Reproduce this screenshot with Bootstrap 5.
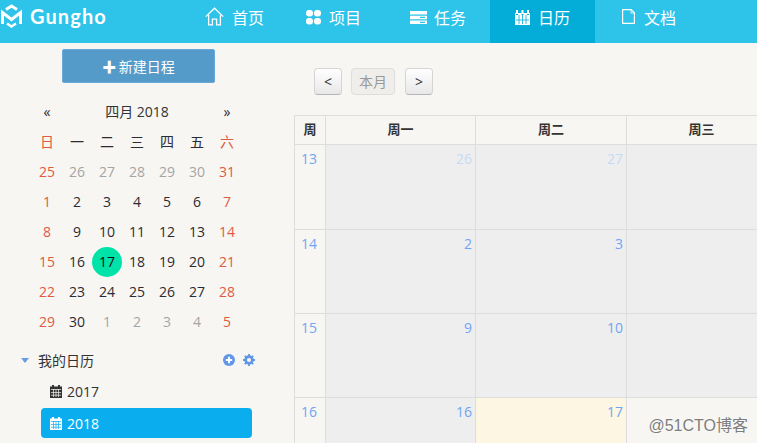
<!DOCTYPE html>
<html lang="zh"><head><meta charset="utf-8">
<link href="https://cdn.jsdelivr.net/npm/bootstrap@5.3.0/dist/css/bootstrap.min.css" rel="stylesheet">
<style>
html,body{height:443px;overflow:hidden}
body{background:#f7f6f2;font-family:"Open Sans","Noto Sans CJK SC",sans-serif;font-size:14px;color:#333}
.topbar{height:43px;background:#2ec3e9;padding:0;flex-wrap:nowrap}
.brand,.brand:hover,.brand:focus{width:175px;height:43px;color:#fff;font-family:"Lato",sans-serif;font-weight:700;font-size:20px;letter-spacing:1.1px;padding:0 0 11px 0;gap:7px}
.menu-link{height:43px;color:#fff;font-size:16px;display:flex;align-items:center;gap:8px;padding:0 0 7px 30px}
.menu-link:hover,.menu-link:focus{color:#fff}
.m1{width:105px}.m2{width:105px;padding-left:26px}.m3{width:105px;padding-left:25px;gap:7px}.m4{width:105px;padding-left:25px;background:#03add8;gap:8px}.m5{padding-left:27px;gap:9px}
.m4:hover,.m4:focus{background:#03add8}
.m1 svg{margin-top:-3px}.m2 svg{margin-top:-2px}
.m3 svg{margin-top:-1px}.m4 svg{margin-top:-2px}.m5 svg{margin-top:-4px}
.shell{height:400px;overflow:hidden}
.side{width:294px;flex:none;position:relative}
.newbtn{display:block;width:153px;height:34px;margin:6px 0 0 62px;padding:0;line-height:31px;background:#559bc9;border:1px solid #68a9d9;border-radius:2px;color:#fff;font-size:14px}
.newbtn:hover{background:#559bc9;color:#fff}
.newbtn b{margin-right:-1px}
.minical{width:210px;margin:13px 0 0 32px;table-layout:fixed;border-collapse:collapse;text-align:center}
.minical td{height:30px;padding:0;vertical-align:middle}
.mcol{width:30px}
.sun{color:#e05a42}.mut{color:#a5a5a5}
.dark{color:#2b2b33}
.todaydot{display:block;width:30px;height:30px;margin:1px 0 -1px;line-height:30px;border-radius:50%;background:#00e3a8;color:#111}
.tree-head{margin:12px 0 0 21px;width:234px;height:24px}
.caret-down{width:0;height:0;border:4px solid transparent;border-top:5px solid #6a9de8;border-bottom:0;margin-right:9px}
.tree-row{height:30px;width:211px;margin-left:41px;padding-left:9px;gap:5px;color:#333;border-radius:4px}
.tree-a{margin-top:4px}
.tree-b{margin-top:2px;background:#0aaeef;color:#fff}
.main{flex:1;min-width:0;overflow:hidden}
.toolbar{margin:25px 0 0 20px;height:27px;gap:9px}
.fcbtn{height:27px;width:28px;padding:0;font-size:14px;line-height:25px;color:#333;background:linear-gradient(#fff,#e8e8e8);border:1px solid #d5d5d5;border-bottom-color:#b5b5b5;border-radius:4px}
.fcoff{width:44px;background:#efeeea;color:#999;border-color:#dedede;opacity:1;margin-right:1px}
.cal{table-layout:fixed;width:482px;max-width:none;margin:20px 0 0;border-collapse:collapse;background:#f7f6f2;--bs-table-bg:transparent}
.cal th,.cal td{border:1px solid #ddd;padding:0}
.cal th{height:29px;text-align:center;font-size:13px;font-weight:700;color:#333;vertical-align:middle}
.cal td{height:84px;vertical-align:top;text-align:right;color:#6fa5f5;font-size:14px;padding:4px 3px 0 0;background:#eee;line-height:20px}
.cal .tall td{height:85px}
.cal td.wk{text-align:center;background:#f7f6f2;padding-right:2px}
.cal td.faint{color:#c7daf5}
.cal td.now{background:#fdf6e3}
.cal td.plain{background:#f7f6f2}
.c0{width:31px}.c1{width:150px}.c2{width:151px}
.wm{position:absolute;right:9px;bottom:5px;font-size:16px;color:#7d7d7d;text-shadow:0 0 2px #fff;font-family:"Liberation Sans","Noto Sans CJK SC",sans-serif}
</style></head>
<body class="position-relative">
<nav class="navbar topbar d-flex justify-content-start">
  <a class="navbar-brand brand d-flex align-items-center m-0" href="#">
    <svg class="ms-0" width="23" height="26" viewBox="0 0 23 26" fill="none" stroke="#fff" stroke-width="3"><path d="M6 6.500 11.500 3 17 6.500"/><path d="M2.500 21V9.500L11.500 16.500l9-7V21"/><path d="M7 20.500l4.500 3 4.500-3" stroke-width="2.400"/></svg>
    <span>Gungho</span>
  </a>
  <ul class="nav flex-nowrap">
    <li class="nav-item"><a class="nav-link menu-link m1" href="#"><svg width="19" height="19" viewBox="0 0 19 19" fill="none" stroke="#fff" stroke-width="1.3"><path d="M.8 9.600 9.500 1.200l8.700 8.400M3.600 8v9.800h3.800v-5.600h4.200v5.600h3.800V8"/></svg>首页</a></li>
    <li class="nav-item"><a class="nav-link menu-link m2" href="#"><svg width="15" height="15" viewBox="0 0 15 15" fill="#fff"><rect x="0" y="0" width="7" height="6.600" rx="3"/><rect x="8" y="0" width="7" height="6.600" rx="3"/><rect x="0" y="8" width="7" height="6.600" rx="3"/><rect x="8" y="8" width="7" height="6.600" rx="3"/></svg>项目</a></li>
    <li class="nav-item"><a class="nav-link menu-link m3" href="#"><svg width="17" height="13" viewBox="0 0 17 13" fill="#fff"><path d="M0 0h17v3.400H0zM0 4.800h17v3.400H0zM0 9.600h17V13H0z"/><path d="M10 5.800h5v1.200h-5zM10 10.700h5v1.200h-5z" fill="#2ec3e9"/></svg>任务</a></li>
    <li class="nav-item"><a class="nav-link menu-link m4" href="#"><svg width="15" height="16" viewBox="0 0 15 16" fill="#fff"><path d="M1 1h2v4H1zM6.500 1h2v4h-2zM12 1h2v4h-2zM0 4h1v2h2V4h3.500v2h2V4H12v2h2V4h1v12H0z"/><path d="M4 6v9M7.500 6v9M11 6v9M1 11h13" stroke="#03add8" stroke-width=".8"/></svg>日历</a></li>
    <li class="nav-item"><a class="nav-link menu-link m5" href="#"><svg width="13" height="15" viewBox="0 0 13 15" fill="none" stroke="#fff" stroke-width="1.200"><path d="M.6.600h8.600l3.200 3.200v10.600H.6z"/><path d="M9 .6v3.400h3.400" stroke-width=".8"/></svg>文档</a></li>
  </ul>
</nav>
<div class="shell d-flex">
  <aside class="side">
    <button class="btn newbtn" type="button"><b>✚</b> 新建日程</button>
    <table class="minical"><colgroup><col class="mcol"><col class="mcol"><col class="mcol"><col class="mcol"><col class="mcol"><col class="mcol"><col class="mcol"></colgroup><tbody id="mini"></tbody></table>
    <div class="tree-head d-flex align-items-center">
      <i class="caret-down"></i><span class="flex-grow-1">我的日历</span>
      <svg width="12" height="12" viewBox="0 0 12 12"><circle cx="6" cy="6" r="6" fill="#5f96e8"/><path d="M2.800 6h6.400M6 2.800v6.400" stroke="#fff" stroke-width="2"/></svg>
      <svg class="ms-2" width="12" height="12" viewBox="0 0 12 12"><circle cx="6" cy="6" r="3.400" fill="none" stroke="#5f96e8" stroke-width="2.600"/><path d="M6 0v12M0 6h12M1.800 1.800l8.400 8.400M10.200 1.800l-8.400 8.400" stroke="#5f96e8" stroke-width="1.800" stroke-dasharray="2.400 7.200 2.400"/></svg>
    </div>
    <div class="tree-row tree-a d-flex align-items-center"><svg width="12" height="13" viewBox="0 0 12 13" fill="#333"><path d="M2 0h2v2H2zM8 0h2v2H8zM0 1.500h12V13H0z"/><path d="M1 4.500h10M1 7.500h10M1 10.200h10M3.500 4v8M6 4v8M8.500 4v8" stroke="#f7f6f2" stroke-width=".7"/></svg>2017</div>
    <div class="tree-row tree-b d-flex align-items-center"><svg width="12" height="13" viewBox="0 0 12 13" fill="#fff"><path d="M2 0h2v2H2zM8 0h2v2H8zM0 1.500h12V13H0z"/><path d="M1 4.500h10M1 7.500h10M1 10.200h10M3.500 4v8M6 4v8M8.500 4v8" stroke="#0aaeef" stroke-width=".7"/></svg>2018</div>
  </aside>
  <main class="main">
    <div class="toolbar d-flex">
      <button class="btn fcbtn" type="button">&lt;</button>
      <button class="btn fcbtn fcoff" type="button">本月</button>
      <button class="btn fcbtn" type="button">&gt;</button>
    </div>
    <table class="table cal">
      <colgroup><col class="c0"><col class="c1"><col class="c2"><col class="c1"></colgroup>
      <thead><tr><th>周</th><th>周一</th><th>周二</th><th>周三</th></tr></thead>
      <tbody>
        <tr class="tall"><td class="wk">13</td><td class="faint">26</td><td class="faint">27</td><td></td></tr>
        <tr><td class="wk">14</td><td>2</td><td>3</td><td></td></tr>
        <tr><td class="wk">15</td><td>9</td><td>10</td><td></td></tr>
        <tr><td class="wk">16</td><td>16</td><td class="now">17</td><td class="plain"></td></tr>
      </tbody>
    </table>
  </main>
</div>
<div class="wm">@51CTO博客</div>
<script>
const head=['日','一','二','三','四','五','六'];
const nums=[[25,26,27,28,29,30,31],[1,2,3,4,5,6,7],[8,9,10,11,12,13,14],[15,16,17,18,19,20,21],[22,23,24,25,26,27,28],[29,30,1,2,3,4,5]];
let h='<tr><td class="dark">«</td><td colspan="5">四月 2018</td><td class="dark">»</td></tr>';
h+='<tr>'+head.map((c,j)=>`<td class="${j==0||j==6?'sun':'dark'}">${c}</td>`).join('')+'</tr>';
nums.forEach((r,i)=>{h+='<tr>'+r.map((n,j)=>{
  const out=(i==0&&n>20)||(i==5&&n<10);
  const cls=(j==0||j==6)?'sun':(out?'mut':'dark');
  if(n==17)return '<td><span class="todaydot">17</span></td>';
  return `<td class="${cls}">${n}</td>`}).join('')+'</tr>'});
document.getElementById('mini').innerHTML=h;
</script>
</body></html>
